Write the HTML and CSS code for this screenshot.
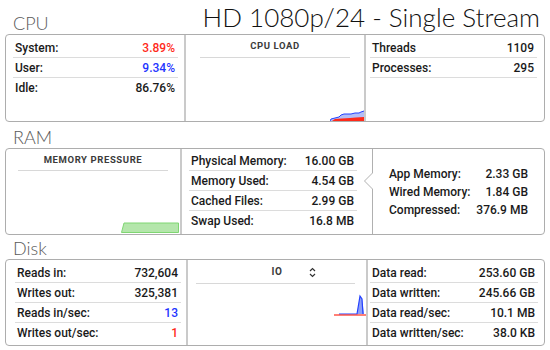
FILE: index.html
```html
<!DOCTYPE html>
<html lang="en">
<head>
  <meta charset="UTF-8" />
  <title>Activity - HD 1080p/24</title>
  <link rel="stylesheet" href="styles.css">
</head>
<body>
  <div class="sec-head first">
    <h2 class="sec-title">CPU</h2>
    <h1 class="stream">HD 1080p/24 - Single Stream</h1>
  </div>
  <div class="box cpu">
    <div class="panel list cpu-a">
      <div class="row"><span>System:</span><span class="red">3.89%</span></div>
      <div class="row"><span>User:</span><span class="blue">9.34%</span></div>
      <div class="row end"><span>Idle:</span><span>86.76%</span></div>
    </div>
    <div class="panel chart cpu-chart">
      <div class="chart-title">CPU LOAD</div>
      <div class="chart-rule"></div>
      <svg class="graph" width="34" height="12" viewBox="0 0 34 12">
        <path d="M0 12 L1 10 L5 9 L9 8 L11 6 L14 5 L21 5 L25 4 L29 4 L31 3 L34 2 L34 12 Z" fill="#b3bdf6"/>
        <path d="M0 12 L1 10 L5 9 L9 8 L11 6 L14 5 L21 5 L25 4 L29 4 L31 3 L34 2" fill="none" stroke="#2340ff" stroke-width="1"/>
        <path d="M2 12 L5 10 L12 9.5 L20 9 L26 8.5 L34 8 L34 12 Z" fill="#ff2a1a"/>
      </svg>
    </div>
    <div class="panel list cpu-b">
      <div class="row"><span>Threads</span><span>1109</span></div>
      <div class="row"><span>Processes:</span><span>295</span></div>
    </div>
  </div>

  <div class="sec-head">
    <h2 class="sec-title">RAM</h2>
  </div>
  <div class="box ram">
    <div class="panel chart ram-chart">
      <div class="chart-title">MEMORY PRESSURE</div>
      <div class="chart-rule"></div>
      <svg class="graph" width="58" height="11" viewBox="0 0 58 11">
        <path d="M0.5 10.5 L3 1 L57.5 1 L57.5 10.5 Z" fill="#b4e6ab" stroke="#7fd672" stroke-width="1"/>
      </svg>
    </div>
    <div class="panel list ram-mid">
      <div class="row"><span>Physical Memory:</span><span>16.00 GB</span></div>
      <div class="row"><span>Memory Used:</span><span>4.54 GB</span></div>
      <div class="row"><span>Cached Files:</span><span>2.99 GB</span></div>
      <div class="row end"><span>Swap Used:</span><span>16.8 MB</span></div>
    </div>
    <div class="panel mem-detail">
      <div class="drow"><span>App Memory:</span><span>2.33 GB</span></div>
      <div class="drow"><span>Wired Memory:</span><span>1.84 GB</span></div>
      <div class="drow"><span>Compressed:</span><span>376.9 MB</span></div>
    </div>
  </div>

  <div class="sec-head last">
    <h2 class="sec-title">Disk</h2>
  </div>
  <div class="box disk">
    <div class="panel list disk-a">
      <div class="row"><span>Reads in:</span><span>732,604</span></div>
      <div class="row"><span>Writes out:</span><span>325,381</span></div>
      <div class="row"><span>Reads in/sec:</span><span class="blue">13</span></div>
      <div class="row end"><span>Writes out/sec:</span><span class="red">1</span></div>
    </div>
    <div class="panel chart io-chart">
      <div class="chart-title io-title">
        <span></span>
        <span>IO</span>
        <svg class="updown" width="7" height="11" viewBox="0 0 7 11">
          <path d="M1 4 L3.5 1.5 L6 4 M1 7 L3.5 9.5 L6 7" fill="none" stroke="#333" stroke-width="1.2"/>
        </svg>
      </div>
      <div class="chart-rule"></div>
      <svg class="graph io-graph" width="32" height="23" viewBox="0 0 32 23">
        <path d="M23 20 L26 2 L28 5 L30 20 Z" fill="#8ea0f7"/>
        <path d="M5 20 L23 20 L26 2 L28 5 L29 20" fill="none" stroke="#2340ff" stroke-width="1.2"/>
        <path d="M0 21 L32 21" stroke="#ff2a1a" stroke-width="1.2"/>
      </svg>
    </div>
    <div class="panel list disk-b">
      <div class="row"><span>Data read:</span><span>253.60 GB</span></div>
      <div class="row"><span>Data written:</span><span>245.66 GB</span></div>
      <div class="row"><span>Data read/sec:</span><span>10.1 MB</span></div>
      <div class="row end"><span>Data written/sec:</span><span>38.0 KB</span></div>
    </div>
  </div>
</body>
</html>
```

FILE: styles.css
```css
* {
  box-sizing: border-box;
}

body {
  margin: 0;
  padding: 0 5px;
  background: #fff;
  font-family: Roboto, 'Liberation Sans', sans-serif;
  font-size: 12px;
  font-weight: 500;
  color: #1a1a1a;
}

.sec-head {
  display: flex;
  justify-content: space-between;
  align-items: flex-end;
  height: 26px;
  padding: 0 5px 0 8px;
}

.sec-head.first {
  height: 34px;
}

.sec-head.last {
  height: 24px;
}

.sec-title {
  margin: 0 0 2px;
  font-family: Lato, 'DejaVu Sans', sans-serif;
  font-weight: 300;
  font-size: 18px;
  line-height: 18px;
  color: #5a5a5a;
}

.stream {
  margin: 0 0 4px;
  font-family: Lato, 'Liberation Sans', sans-serif;
  font-weight: 300;
  font-size: 26px;
  line-height: 26px;
  color: #111;
}

.box {
  display: grid;
  height: 87px;
  border: 1px solid #adadad;
  border-radius: 4px;
}

.cpu { grid-template-columns: 178px 180px 1fr; height: 88px; }
.ram { grid-template-columns: 174px 192px 1fr; }
.disk { grid-template-columns: 180px 180px 1fr; }

.panel + .panel {
  border-left: 2px solid #cacaca;
}

.row {
  display: flex;
  justify-content: space-between;
  align-items: center;
  height: 20px;
  padding: 0 3px 0 2px;
  border-bottom: 1px solid #dcdcdc;
}

.row.end {
  border-bottom: none;
}

.cpu-a { padding: 3px 6px 0 7px; }
.cpu-b { padding: 3px 7px 0 4px; }
.ram-mid { padding: 2px 15px 0 7px; }
.disk-a { padding: 3px 5px 0 9px; }
.disk-b { padding: 3px 6px 0 2px; }

.red { color: #ff2a1a; }
.blue { color: #1f35ff; }

/* popover-like detail panel */
.panel.mem-detail {
  position: relative;
  display: flex;
  flex-direction: column;
  justify-content: center;
  padding: 0 16px 0 16px;
  border-left: 1px solid #b0b0b0;
}

.mem-detail::before,
.mem-detail::after {
  content: "";
  position: absolute;
  top: 24px;
  border-top: 8px solid transparent;
  border-bottom: 8px solid transparent;
}

.mem-detail::before {
  left: -9px;
  border-right: 8px solid #b0b0b0;
}

.mem-detail::after {
  left: -8px;
  border-right: 8px solid #fff;
}

.drow {
  display: flex;
  justify-content: space-between;
  height: 18px;
  line-height: 18px;
}

.chart {
  display: flex;
  flex-direction: column;
}

.chart-title {
  padding-top: 5px;
  font-size: 9.5px;
  font-weight: 700;
  letter-spacing: 0.6px;
  line-height: 12px;
  text-align: center;
  color: #3b3b3b;
}

.chart-rule {
  height: 1px;
  background: #d8d8d8;
  margin-top: 5px;
}

.cpu-chart .chart-rule { margin: 5px 14px 0 14px; }
.ram-chart .chart-rule { margin: 4px 12px 0 12px; }
.io-chart .chart-rule { margin: 5px 11px 0 8px; }

.graph {
  display: block;
  margin-top: auto;
  align-self: flex-end;
}

.ram-chart .graph {
  margin: auto 1px 1px 0;
}

.io-title {
  display: grid;
  grid-template-columns: 1fr auto 1fr;
  align-items: center;
  padding-top: 6px;
  font-size: 10px;
}

.updown {
  display: block;
  margin-left: 26px;
}

.io-graph {
  margin-top: 10px;
}
```
